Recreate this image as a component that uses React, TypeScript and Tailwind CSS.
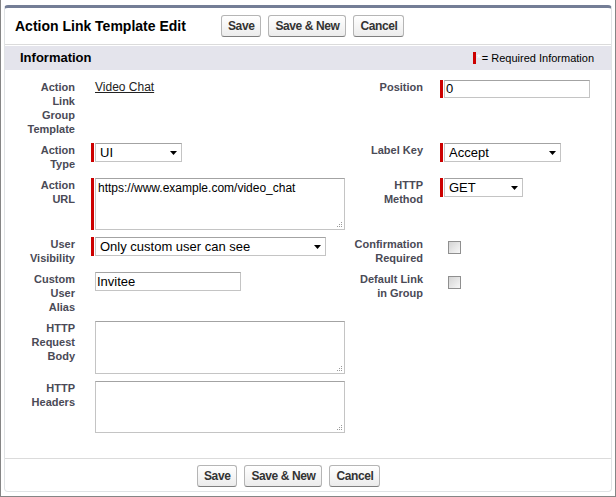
import type { ReactNode } from 'react';

const labelCls =
  'text-right pr-[16px] text-[11px] leading-[14px] font-bold text-[#4a4a56]';
const boxBorder = 'border border-[#c4c4c4] border-t-[#a3a3a3] bg-white';

const Label = ({ lines, className = '' }: { lines: string[]; className?: string }) => (
  <div className={`${labelCls} ${className}`}>
    {lines.map((line) => (
      <div key={line}>{line}</div>
    ))}
  </div>
);

const Field = ({ required = false, children }: { required?: boolean; children: ReactNode }) => (
  <div className="flex items-stretch">
    <div className={`w-[3px] mr-[1px] shrink-0 ${required ? 'bg-[#c00]' : ''}`} />
    {children}
  </div>
);

const Select = ({ value, width }: { value: string; width: string }) => (
  <div className={`relative ${width}`}>
    <select
      defaultValue={value}
      className={`block appearance-none w-full h-[19px] pl-[4px] pr-[14px] text-[13px] leading-[17px] text-black outline-none ${boxBorder}`}
    >
      <option>{value}</option>
    </select>
    <svg
      className="absolute right-[5px] top-[8px] pointer-events-none"
      width="7"
      height="4"
      viewBox="0 0 7 4"
    >
      <path d="M0 0h7L3.5 4z" fill="#000" />
    </svg>
  </div>
);

const Grip = () => (
  <svg
    className="absolute right-[2px] bottom-[2px] pointer-events-none"
    width="7"
    height="7"
    viewBox="0 0 7 7"
  >
    <g fill="#9a9a9a">
      <rect x="5" y="1" width="1" height="1" />
      <rect x="3" y="3" width="1" height="1" />
      <rect x="5" y="3" width="1" height="1" />
      <rect x="1" y="5" width="1" height="1" />
      <rect x="3" y="5" width="1" height="1" />
      <rect x="5" y="5" width="1" height="1" />
    </g>
  </svg>
);

const TextArea = ({ value = '', height }: { value?: string; height: string }) => (
  <div className={`relative w-[250px] ${height}`}>
    <textarea
      defaultValue={value}
      className={`block w-full h-full resize-none px-[2px] py-[2px] text-[12px] leading-[15px] text-black outline-none ${boxBorder}`}
    />
    <Grip />
  </div>
);

const TextInput = ({ value, height }: { value: string; height: string }) => (
  <input
    defaultValue={value}
    className={`w-[146px] ${height} px-[1px] text-[13px] text-black outline-none ${boxBorder}`}
  />
);

const Checkbox = () => (
  <div className="ml-[4px] mt-[4px] w-[13px] h-[13px] border border-[#8f8f8f] bg-linear-to-br from-[#d4d4d4] to-[#f7f7f7]" />
);

const Btn = ({ children }: { children: ReactNode }) => (
  <button
    type="button"
    className="h-[22px] px-[6px] rounded-[3px] border border-[#b5b5b5] border-b-[#7f7f7f] bg-linear-to-b from-white to-[#ececec] text-[12px] tracking-[-0.4px] font-bold text-[#333]"
  >
    {children}
  </button>
);

const Buttons = () => (
  <div className="flex items-center gap-[7px]">
    <Btn>Save</Btn>
    <Btn>Save &amp; New</Btn>
    <Btn>Cancel</Btn>
  </div>
);

export default function App() {
  return (
    <div className="w-[616px] h-[497px] bg-white border-x border-b border-[#858585] px-[3px] pt-[5px] font-['Liberation_Sans',Arial,sans-serif]">
      <div className="rounded-[4px] border border-[#e0e3e5] border-t-[3px] border-t-[#747e96] bg-white">
        <div className="h-[37px] flex items-center border-b border-[#dbdbdb]">
          <h2 className="w-[216px] pl-[10px] text-[14px] font-bold text-black">
            Action Link Template Edit
          </h2>
          <Buttons />
        </div>

        <div className="mt-[1px] h-[24px] bg-[#e4e4ec] flex items-center justify-between pl-[15px] pr-[17px]">
          <h3 className="text-[13px] font-bold text-black">Information</h3>
          <div className="flex items-center text-[11px] text-black">
            <span className="w-[3px] h-[12px] bg-[#c00]" />
            <span className="text-white px-[1px]">*</span>
            <span>= Required Information</span>
          </div>
        </div>

        <div className="grid grid-cols-[86px_263px_86px_1fr] items-start gap-y-[7px] pt-[10px] pb-[25px]">
          <Label lines={['Action', 'Link', 'Group', 'Template']} />
          <Field>
            <a className="text-[12px] leading-[14px] text-[#222] underline">Video Chat</a>
          </Field>
          <Label lines={['Position']} className="pr-[17px]" />
          <Field required>
            <TextInput value="0" height="h-[18px]" />
          </Field>

          <Label lines={['Action', 'Type']} />
          <Field required>
            <Select value="UI" width="w-[87px]" />
          </Field>
          <Label lines={['Label Key']} className="pr-[17px]" />
          <Field required>
            <Select value="Accept" width="w-[117px]" />
          </Field>

          <Label lines={['Action', 'URL']} />
          <Field required>
            <TextArea value="https://www.example.com/video_chat" height="h-[52px]" />
          </Field>
          <Label lines={['HTTP', 'Method']} className="pr-[17px]" />
          <Field required>
            <Select value="GET" width="w-[79px]" />
          </Field>

          <Label lines={['User', 'Visibility']} />
          <Field required>
            <Select value="Only custom user can see" width="w-[231px]" />
          </Field>
          <Label lines={['Confirmation', 'Required']} className="pr-[17px]" />
          <Field>
            <Checkbox />
          </Field>

          <Label lines={['Custom', 'User', 'Alias']} />
          <Field>
            <TextInput value="Invitee" height="h-[19px]" />
          </Field>
          <Label lines={['Default Link', 'in Group']} className="pr-[17px]" />
          <Field>
            <Checkbox />
          </Field>

          <Label lines={['HTTP', 'Request', 'Body']} />
          <Field>
            <TextArea height="h-[53px]" />
          </Field>
          <div />
          <div />

          <Label lines={['HTTP', 'Headers']} />
          <Field>
            <TextArea height="h-[52px]" />
          </Field>
          <div />
          <div />
        </div>

        <div className="border-t border-[#dbdbdb] pt-[6px] pb-[4px] pl-[192px]">
          <Buttons />
        </div>
      </div>
    </div>
  );
}
